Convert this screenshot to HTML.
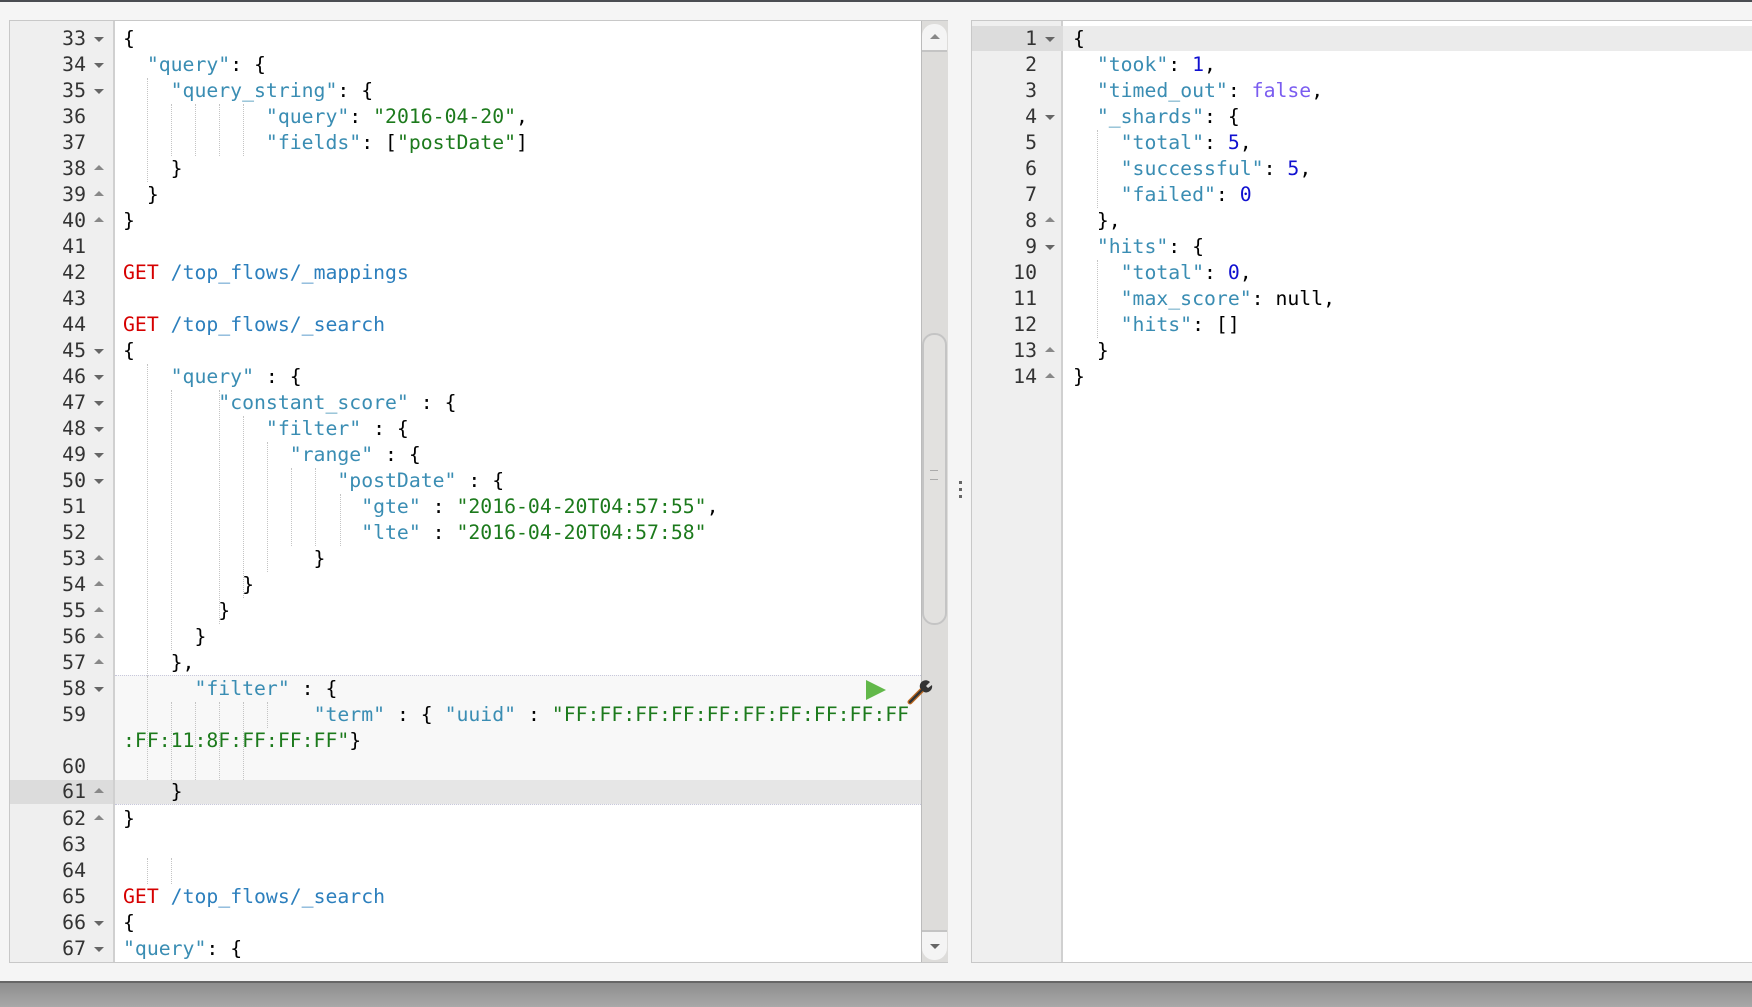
<!DOCTYPE html>
<html><head><meta charset="utf-8"><style>
*{margin:0;padding:0;box-sizing:border-box}
body{width:1752px;height:1007px;background:#f5f5f5;position:relative;overflow:hidden;font-family:"DejaVu Sans Mono","Liberation Mono",monospace;font-size:19.8px}
.abs{position:absolute}
.l{position:absolute;white-space:pre;height:26px;line-height:26px;color:#000}
.n{position:absolute;white-space:pre;height:26px;line-height:26px;text-align:right;color:#333}
.k{color:#3a8db3}.s{color:#1c7a1c}.m{color:#d60000}.p{color:#2c7fbd}.num{color:#1010d0}.b{color:#7a5cf0}
.ar{position:absolute;width:0;height:0;border-left:5px solid transparent;border-right:5px solid transparent}
.dn{border-top:5px solid #666}.up{border-bottom:5px solid #888}
.g{position:absolute;width:0;border-left:1px dotted #c4c4c4}
</style></head><body>
<div class="abs" style="left:0;top:0;width:1752px;height:2px;background:#4a4d52"></div>
<div class="abs" style="left:0;top:981px;width:1752px;height:2px;background:#666"></div>
<div class="abs" style="left:0;top:983px;width:1752px;height:24px;background:linear-gradient(#8e8e8e,#a8a8a8)"></div>

<!-- left panel -->
<div class="abs" style="left:9px;top:20px;width:939px;height:943px;background:#fff;border:1px solid #c8c8c8"></div>
<div class="abs" style="left:10px;top:21px;width:105px;height:941px;background:#efefef;border-right:2px solid #d0d0d0"></div>
<div class="abs" style="left:115px;top:675px;width:806px;height:130px;background:#f8f8f8;border-top:1px dotted #c8c8dc;border-bottom:1px dotted #c8c8dc"></div>
<div class="abs" style="left:115px;top:780px;width:806px;height:24px;background:#e6e6e6"></div>
<div class="abs" style="left:10px;top:780px;width:103px;height:24px;background:#dcdcdc"></div>

<!-- indent guides -->
<div class="g" style="left:147px;top:78px;height:104px"></div>
<div class="g" style="left:171px;top:104px;height:52px"></div>
<div class="g" style="left:195px;top:104px;height:52px"></div>
<div class="g" style="left:219px;top:104px;height:52px"></div>
<div class="g" style="left:243px;top:104px;height:52px"></div>
<div class="g" style="left:147px;top:364px;height:312px"></div>
<div class="g" style="left:171px;top:390px;height:260px"></div>
<div class="g" style="left:219px;top:390px;height:234px"></div>
<div class="g" style="left:243px;top:416px;height:182px"></div>
<div class="g" style="left:267px;top:442px;height:130px"></div>
<div class="g" style="left:291px;top:468px;height:78px"></div>
<div class="g" style="left:315px;top:468px;height:78px"></div>
<div class="g" style="left:340px;top:494px;height:52px"></div>
<div class="g" style="left:147px;top:676px;height:104px"></div>
<div class="g" style="left:171px;top:702px;height:78px"></div>
<div class="g" style="left:195px;top:702px;height:78px"></div>
<div class="g" style="left:219px;top:702px;height:78px"></div>
<div class="g" style="left:243px;top:702px;height:78px"></div>
<div class="g" style="left:267px;top:702px;height:26px"></div>
<div class="g" style="left:147px;top:858px;height:26px"></div>
<div class="g" style="left:171px;top:858px;height:26px"></div>

<!-- scrollbar -->
<div class="abs" style="left:921px;top:21px;width:27px;height:941px;background:#dddcda;border-left:1px solid #bbb"></div>
<div class="abs" style="left:922px;top:24px;width:25px;height:28px;background:#f4f4f4;border-radius:12px 12px 0 0;border-bottom:2px solid #c4c4c4"></div>
<div class="ar up" style="left:930px;top:34px"></div>
<div class="abs" style="left:922px;top:333px;width:25px;height:292px;border:2px solid #c4c4c4;border-radius:12px;background:#e2e1df"></div>
<div class="abs" style="left:922px;top:930px;width:25px;height:30px;background:#f4f4f4;border-radius:0 0 12px 12px;border-top:2px solid #c4c4c4"></div>
<div class="ar dn" style="left:930px;top:944px"></div>
<div class="abs" style="left:930px;top:470px;width:8px;height:10px;border-top:1px solid #aaa;border-bottom:1px solid #aaa"></div>
<!-- splitter dots -->
<div class="abs" style="left:959px;top:481px;width:3px;height:3px;background:#666"></div>
<div class="abs" style="left:959px;top:488px;width:3px;height:3px;background:#666"></div>
<div class="abs" style="left:959px;top:495px;width:3px;height:3px;background:#666"></div>

<!-- play & wrench -->
<svg class="abs" style="left:864px;top:678px" width="24" height="24"><polygon points="2,2 22,12 2,22" fill="#62b84a"/></svg>
<svg class="abs" style="left:906px;top:678px" width="28" height="28"><path d="M4 24 L16 12" stroke="#c06a20" stroke-width="5" stroke-linecap="round"/><path d="M4 24 L16 12" stroke="#333" stroke-width="2.5" stroke-linecap="round"/><path d="M14 10 A6 6 0 0 1 24 4 L20 8 L22 10 L26 7 A6 6 0 0 1 18 14 Z" fill="#333"/></svg>

<!-- left gutter numbers -->
<div class="n" style="left:20px;width:66px;top:26px">33</div><div class="ar dn" style="left:94px;top:37px"></div>
<div class="n" style="left:20px;width:66px;top:52px">34</div><div class="ar dn" style="left:94px;top:63px"></div>
<div class="n" style="left:20px;width:66px;top:78px">35</div><div class="ar dn" style="left:94px;top:89px"></div>
<div class="n" style="left:20px;width:66px;top:104px">36</div>
<div class="n" style="left:20px;width:66px;top:130px">37</div>
<div class="n" style="left:20px;width:66px;top:156px">38</div><div class="ar up" style="left:94px;top:165px"></div>
<div class="n" style="left:20px;width:66px;top:182px">39</div><div class="ar up" style="left:94px;top:191px"></div>
<div class="n" style="left:20px;width:66px;top:208px">40</div><div class="ar up" style="left:94px;top:217px"></div>
<div class="n" style="left:20px;width:66px;top:234px">41</div>
<div class="n" style="left:20px;width:66px;top:260px">42</div>
<div class="n" style="left:20px;width:66px;top:286px">43</div>
<div class="n" style="left:20px;width:66px;top:312px">44</div>
<div class="n" style="left:20px;width:66px;top:338px">45</div><div class="ar dn" style="left:94px;top:349px"></div>
<div class="n" style="left:20px;width:66px;top:364px">46</div><div class="ar dn" style="left:94px;top:375px"></div>
<div class="n" style="left:20px;width:66px;top:390px">47</div><div class="ar dn" style="left:94px;top:401px"></div>
<div class="n" style="left:20px;width:66px;top:416px">48</div><div class="ar dn" style="left:94px;top:427px"></div>
<div class="n" style="left:20px;width:66px;top:442px">49</div><div class="ar dn" style="left:94px;top:453px"></div>
<div class="n" style="left:20px;width:66px;top:468px">50</div><div class="ar dn" style="left:94px;top:479px"></div>
<div class="n" style="left:20px;width:66px;top:494px">51</div>
<div class="n" style="left:20px;width:66px;top:520px">52</div>
<div class="n" style="left:20px;width:66px;top:546px">53</div><div class="ar up" style="left:94px;top:555px"></div>
<div class="n" style="left:20px;width:66px;top:572px">54</div><div class="ar up" style="left:94px;top:581px"></div>
<div class="n" style="left:20px;width:66px;top:598px">55</div><div class="ar up" style="left:94px;top:607px"></div>
<div class="n" style="left:20px;width:66px;top:624px">56</div><div class="ar up" style="left:94px;top:633px"></div>
<div class="n" style="left:20px;width:66px;top:650px">57</div><div class="ar up" style="left:94px;top:659px"></div>
<div class="n" style="left:20px;width:66px;top:676px">58</div><div class="ar dn" style="left:94px;top:687px"></div>
<div class="n" style="left:20px;width:66px;top:702px">59</div>
<div class="n" style="left:20px;width:66px;top:754px">60</div>
<div class="n" style="left:20px;width:66px;top:779px">61</div><div class="ar up" style="left:94px;top:788px"></div>
<div class="n" style="left:20px;width:66px;top:806px">62</div><div class="ar up" style="left:94px;top:815px"></div>
<div class="n" style="left:20px;width:66px;top:832px">63</div>
<div class="n" style="left:20px;width:66px;top:858px">64</div>
<div class="n" style="left:20px;width:66px;top:884px">65</div>
<div class="n" style="left:20px;width:66px;top:910px">66</div><div class="ar dn" style="left:94px;top:921px"></div>
<div class="n" style="left:20px;width:66px;top:936px">67</div><div class="ar dn" style="left:94px;top:947px"></div>

<!-- left code -->
<div class="l" style="left:123px;top:26px">{</div>
<div class="l" style="left:123px;top:52px">  <span class="k">"query"</span>: {</div>
<div class="l" style="left:123px;top:78px">    <span class="k">"query_string"</span>: {</div>
<div class="l" style="left:123px;top:104px">            <span class="k">"query"</span>: <span class="s">"2016-04-20"</span>,</div>
<div class="l" style="left:123px;top:130px">            <span class="k">"fields"</span>: [<span class="s">"postDate"</span>]</div>
<div class="l" style="left:123px;top:156px">    }</div>
<div class="l" style="left:123px;top:182px">  }</div>
<div class="l" style="left:123px;top:208px">}</div>
<div class="l" style="left:123px;top:260px"><span class="m">GET</span> <span class="p">/top_flows/_mappings</span></div>
<div class="l" style="left:123px;top:312px"><span class="m">GET</span> <span class="p">/top_flows/_search</span></div>
<div class="l" style="left:123px;top:338px">{</div>
<div class="l" style="left:123px;top:364px">    <span class="k">"query"</span> : {</div>
<div class="l" style="left:123px;top:390px">        <span class="k">"constant_score"</span> : {</div>
<div class="l" style="left:123px;top:416px">            <span class="k">"filter"</span> : {</div>
<div class="l" style="left:123px;top:442px">              <span class="k">"range"</span> : {</div>
<div class="l" style="left:123px;top:468px">                  <span class="k">"postDate"</span> : {</div>
<div class="l" style="left:123px;top:494px">                    <span class="k">"gte"</span> : <span class="s">"2016-04-20T04:57:55"</span>,</div>
<div class="l" style="left:123px;top:520px">                    <span class="k">"lte"</span> : <span class="s">"2016-04-20T04:57:58"</span></div>
<div class="l" style="left:123px;top:546px">                }</div>
<div class="l" style="left:123px;top:572px">          }</div>
<div class="l" style="left:123px;top:598px">        }</div>
<div class="l" style="left:123px;top:624px">      }</div>
<div class="l" style="left:123px;top:650px">    },</div>
<div class="l" style="left:123px;top:676px">      <span class="k">"filter"</span> : {</div>
<div class="l" style="left:123px;top:702px">                <span class="k">"term"</span> : { <span class="k">"uuid"</span> : <span class="s">"FF:FF:FF:FF:FF:FF:FF:FF:FF:FF</span></div>
<div class="l" style="left:123px;top:728px"><span class="s">:FF:11:8F:FF:FF:FF"</span>}</div>
<div class="l" style="left:123px;top:779px">    }</div>
<div class="l" style="left:123px;top:806px">}</div>
<div class="l" style="left:123px;top:884px"><span class="m">GET</span> <span class="p">/top_flows/_search</span></div>
<div class="l" style="left:123px;top:910px">{</div>
<div class="l" style="left:123px;top:936px"><span class="k">"query"</span>: {</div>

<!-- right panel -->
<div class="abs" style="left:971px;top:20px;width:790px;height:943px;background:#fff;border:1px solid #c8c8c8"></div>
<div class="abs" style="left:972px;top:21px;width:91px;height:941px;background:#efefef;border-right:2px solid #d0d0d0"></div>
<div class="abs" style="left:972px;top:26px;width:91px;height:25px;background:#dcdcdc"></div>
<div class="abs" style="left:1063px;top:26px;width:700px;height:25px;background:#ebebeb"></div>
<div class="g" style="left:1097px;top:130px;height:78px"></div>
<div class="g" style="left:1097px;top:260px;height:78px"></div>

<div class="n" style="left:980px;width:57px;top:26px">1</div><div class="ar dn" style="left:1045px;top:37px"></div>
<div class="n" style="left:980px;width:57px;top:52px">2</div>
<div class="n" style="left:980px;width:57px;top:78px">3</div>
<div class="n" style="left:980px;width:57px;top:104px">4</div><div class="ar dn" style="left:1045px;top:115px"></div>
<div class="n" style="left:980px;width:57px;top:130px">5</div>
<div class="n" style="left:980px;width:57px;top:156px">6</div>
<div class="n" style="left:980px;width:57px;top:182px">7</div>
<div class="n" style="left:980px;width:57px;top:208px">8</div><div class="ar up" style="left:1045px;top:217px"></div>
<div class="n" style="left:980px;width:57px;top:234px">9</div><div class="ar dn" style="left:1045px;top:245px"></div>
<div class="n" style="left:980px;width:57px;top:260px">10</div>
<div class="n" style="left:980px;width:57px;top:286px">11</div>
<div class="n" style="left:980px;width:57px;top:312px">12</div>
<div class="n" style="left:980px;width:57px;top:338px">13</div><div class="ar up" style="left:1045px;top:347px"></div>
<div class="n" style="left:980px;width:57px;top:364px">14</div><div class="ar up" style="left:1045px;top:373px"></div>

<div class="l" style="left:1073px;top:26px">{</div>
<div class="l" style="left:1073px;top:52px">  <span class="k">"took"</span>: <span class="num">1</span>,</div>
<div class="l" style="left:1073px;top:78px">  <span class="k">"timed_out"</span>: <span class="b">false</span>,</div>
<div class="l" style="left:1073px;top:104px">  <span class="k">"_shards"</span>: {</div>
<div class="l" style="left:1073px;top:130px">    <span class="k">"total"</span>: <span class="num">5</span>,</div>
<div class="l" style="left:1073px;top:156px">    <span class="k">"successful"</span>: <span class="num">5</span>,</div>
<div class="l" style="left:1073px;top:182px">    <span class="k">"failed"</span>: <span class="num">0</span></div>
<div class="l" style="left:1073px;top:208px">  },</div>
<div class="l" style="left:1073px;top:234px">  <span class="k">"hits"</span>: {</div>
<div class="l" style="left:1073px;top:260px">    <span class="k">"total"</span>: <span class="num">0</span>,</div>
<div class="l" style="left:1073px;top:286px">    <span class="k">"max_score"</span>: null,</div>
<div class="l" style="left:1073px;top:312px">    <span class="k">"hits"</span>: []</div>
<div class="l" style="left:1073px;top:338px">  }</div>
<div class="l" style="left:1073px;top:364px">}</div>
</body></html>
